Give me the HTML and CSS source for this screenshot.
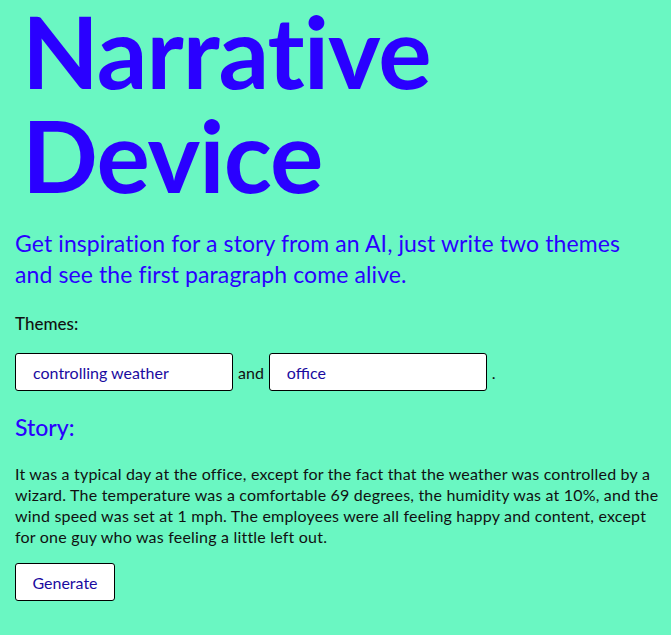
FILE: index.html
```html
<!DOCTYPE html>
<html lang="en">
<head>
  <meta charset="UTF-8">
  <meta name="viewport" content="width=device-width, initial-scale=1.0">
  <title>Narrative Device</title>
  <link rel="stylesheet" href="styles.css">
</head>
<body>

  <h1>Narrative Device</h1>

  <p class="intro">Get inspiration for a story from an AI, just write two themes and see the first paragraph come alive.</p>

  <!-- Theme inputs -->
  <div class="themes">
    <label for="theme1">Themes:</label>
    <div class="theme-row">
      <input type="text" id="theme1" value="controlling weather" />
      <span>and</span>
      <input type="text" id="theme2" value="office" />
      <span>.</span>
    </div>
  </div>

  <h2>Story:</h2>
  <p class="story">It was a typical day at the office, except for the fact that the weather was controlled by a wizard. The temperature was a comfortable 69 degrees, the humidity was at 10%, and the wind speed was set at 1 mph. The employees were all feeling happy and content, except for one guy who was feeling a little left out.</p>

  <button>Generate</button>

</body>
</html>
```

FILE: styles.css
```css
body {
  font-family: Lato, 'Open Sans', sans-serif;
  background: #6af7c2;
  padding: 0 8px 0 15px;
  margin: 0;
  color: #111;
}
h1 {
  color: #2a00ff;
  font-size: 100px;
  line-height: 104px;
  font-weight: 700;
  margin: -2px 0 0;
  padding-left: 7px;
  letter-spacing: -1px;
}
.intro {
  color: #2a00ff;
  font-size: 23px;
  line-height: 31px;
  margin: 22px 0 0;
  letter-spacing: 0.1px;
}
.themes label {
  display: block;
  font-size: 17px;
  margin-top: 23px;
  font-weight: 500;
}
.theme-row {
  display: flex;
  align-items: center;
  gap: 5px;
  margin-top: 19px;
  font-size: 16px;
}
input {
  width: 218px;
  height: 38px;
  box-sizing: border-box;
  padding: 0 17px;
  font-family: inherit;
  font-size: 16px;
  color: #1a0aa0;
  background: #fff;
  border: 1px solid #000;
  border-radius: 3px;
}
h2 {
  color: #2a00ff;
  font-size: 23px;
  font-weight: 500;
  margin: 22px 0 0;
}
.story {
  font-size: 16px;
  line-height: 21px;
  letter-spacing: 0.2px;
  margin: 22px 0 0;
}
button {
  margin-top: 16px;
  height: 38px;
  width: 100px;
  font-family: inherit;
  font-size: 16px;
  color: #1a0aa0;
  background: #fff;
  border: 1px solid #000;
  border-radius: 3px;
  cursor: pointer;
}
```
